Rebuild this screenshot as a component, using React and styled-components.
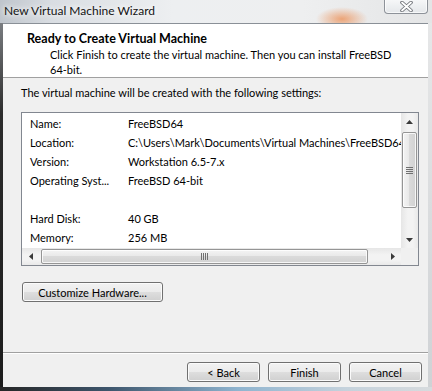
import React from 'react';
import styled, { createGlobalStyle } from 'styled-components';

const FONT = `Lato, "Open Sans", "Liberation Sans", sans-serif`;

const Global = createGlobalStyle`
  html, body { margin: 0; padding: 0; width: 432px; height: 391px; overflow: hidden; }
  body { font-family: ${FONT}; font-size: 11px; color: #000; }
  * { box-sizing: border-box; }
`;

const Window = styled.div`
  width: 432px;
  height: 391px;
  display: flex;
  flex-direction: column;
  overflow: hidden;
  background:
    radial-gradient(ellipse 26px 12px at 342px 19px, rgba(236, 140, 80, 0.75), rgba(236, 140, 80, 0) 100%),
    linear-gradient(90deg, #bfc5cc 0%, #d9dde2 12%, #edeff1 40%, #eeeff0 70%, #e4e5e6 100%);
`;

const TitleBar = styled.div`
  height: 23px;
  flex-shrink: 0;
  display: flex;
  align-items: flex-start;
`;

const Caption = styled.div`
  flex: 1;
  font-size: 12px;
  line-height: 16px;
  padding: 3px 0 0 4px;
  color: #141414;
  text-shadow: 0 0 5px #fff, 0 0 9px #fff;
`;

const CloseButton = styled.div`
  width: 44px;
  height: 15px;
  margin: -1px 4px 0 0;
  border: 1px solid #8d9299;
  border-top: none;
  border-radius: 0 0 4px 4px;
  background: linear-gradient(#f7f8f9, #e4e7ea);
  box-shadow: inset 0 0 0 1px rgba(255, 255, 255, 0.7);
  display: flex;
  align-items: center;
  justify-content: center;
`;

const Body = styled.div`
  flex: 1;
  min-height: 0;
  display: flex;
`;

const EdgeLeft = styled.div`
  width: 3px;
  background: linear-gradient(#7a7d81, #2c2c2c 25%, #1c1c1c);
`;

const EdgeRight = styled.div`
  width: 4px;
  background: linear-gradient(#e6e7e8, #cfd2d5);
`;

const BottomEdge = styled.div`
  height: 4px;
  flex-shrink: 0;
  background: linear-gradient(90deg, #262626 0%, #3d556c 25%, #8fb4cf 55%, #c5d2dc 80%, #d7dbde 100%);
`;

const Client = styled.div`
  flex: 1;
  display: flex;
  flex-direction: column;
  background: #f0f0f0;
  border-top: 1px solid #8a9097;
`;

const Header = styled.div`
  height: 54px;
  flex-shrink: 0;
  background: #fff;
  border-bottom: 1px solid #a0a0a0;
  padding: 7px 10px 0 24px;
`;

const HeaderTitle = styled.div`
  font-weight: 700;
  font-size: 12.5px;
  line-height: 16px;
`;

const HeaderText = styled.div`
  padding-left: 23px;
  line-height: 15px;
`;

const Content = styled.div`
  padding: 7px 9px 0 18px;
  display: flex;
  flex-direction: column;
  align-items: flex-start;
`;

const Intro = styled.div`
  line-height: 15px;
`;

const ListBox = styled.div`
  margin-top: 12px;
  width: 398px;
  height: 154px;
  border: 1px solid #828790;
  background: #fff;
  display: grid;
  grid-template-columns: 1fr 17px;
  grid-template-rows: 1fr 17px;
`;

const ListArea = styled.div`
  overflow: hidden;
  padding: 1px 0 0 8px;
`;

const Row = styled.div`
  display: flex;
  height: 19px;
  line-height: 19px;
  white-space: nowrap;
`;

const Label = styled.div`
  width: 98px;
  flex-shrink: 0;
`;

const Value = styled.div``;

const VScroll = styled.div`
  display: flex;
  flex-direction: column;
  background: linear-gradient(90deg, #e6e6e6, #f3f3f3 40%, #f3f3f3 70%, #e9e9e9);
`;

const HScroll = styled.div`
  display: flex;
  background: linear-gradient(#e6e6e6, #f3f3f3 40%, #f3f3f3 70%, #e9e9e9);
`;

const ArrowBox = styled.div`
  width: 17px;
  height: 17px;
  flex-shrink: 0;
  display: flex;
  align-items: center;
  justify-content: center;
`;

const Track = styled.div`
  flex: 1;
  display: flex;
  flex-direction: ${p => (p.vertical ? 'column' : 'row')};
`;

const Thumb = styled.div`
  border: 1px solid #959595;
  border-radius: 2px;
  display: flex;
  align-items: center;
  justify-content: center;
  box-shadow: inset 0 0 0 1px rgba(255, 255, 255, 0.8);
  ${p =>
    p.vertical
      ? `margin: 2px 1px 0 1px; height: 76px;
         background: linear-gradient(90deg, #f4f4f4, #e9e9e9 45%, #dadada 50%, #d2d2d2 100%);`
      : `margin: 1px 0 1px 2px; width: 327px;
         background: linear-gradient(#f4f4f4, #e9e9e9 45%, #dadada 50%, #d2d2d2 100%);`}
`;

const Corner = styled.div`
  background: #f0f0f0;
`;

const Button = styled.button`
  height: 20px;
  width: ${p => p.w || 73}px;
  padding: 0;
  border: 1px solid #707070;
  border-radius: 3px;
  background: linear-gradient(#f2f2f2 0%, #ebebeb 50%, #dedede 50%, #d0d0d0 100%);
  box-shadow: inset 0 0 0 1px #fbfbfb;
  font-family: ${FONT};
  font-size: 11px;
  color: #000;
  line-height: 17px;
`;

const CustomizeButton = styled(Button)`
  margin: 16px 0 0 1px;
`;

const Footer = styled.div`
  margin-top: auto;
  border-top: 1px solid #a0a0a0;
  box-shadow: inset 0 1px 0 #fff;
  padding: 9px 6px 5px;
  display: flex;
  justify-content: flex-end;
  gap: 8px;
`;

const Arrow = ({ dir }) => {
  const pts = {
    up: '0,4 3.5,0 7,4',
    down: '0,0 7,0 3.5,4',
    left: '4,0 4,7 0,3.5',
    right: '0,0 4,3.5 0,7',
  }[dir];
  const horiz = dir === 'left' || dir === 'right';
  return (
    <svg width={horiz ? 4 : 7} height={horiz ? 7 : 4} viewBox={horiz ? '0 0 4 7' : '0 0 7 4'}>
      <polygon points={pts} fill="#3a3a3a" />
    </svg>
  );
};

const GripV = () => (
  <svg width="7" height="7" viewBox="0 0 7 7">
    {[0.5, 2.5, 4.5, 6.5].map(y => (
      <line key={y} x1="0" x2="7" y1={y} y2={y} stroke="#707070" strokeWidth="1" />
    ))}
  </svg>
);

const GripH = () => (
  <svg width="7" height="7" viewBox="0 0 7 7">
    {[0.5, 2.5, 4.5, 6.5].map(x => (
      <line key={x} y1="0" y2="7" x1={x} x2={x} stroke="#707070" strokeWidth="1" />
    ))}
  </svg>
);

const CloseGlyph = () => (
  <svg width="13" height="11" viewBox="0 0 13 11">
    <path d="M2 1.5 L11 9.5 M11 1.5 L2 9.5" stroke="#6d7076" strokeWidth="3.6" strokeLinecap="round" />
    <path d="M2 1.5 L11 9.5 M11 1.5 L2 9.5" stroke="#ffffff" strokeWidth="1.8" strokeLinecap="round" />
  </svg>
);

const settings = [
  ['Name:', 'FreeBSD64'],
  ['Location:', 'C:\\Users\\Mark\\Documents\\Virtual Machines\\FreeBSD64'],
  ['Version:', 'Workstation 6.5-7.x'],
  ['Operating Syst...', 'FreeBSD 64-bit'],
  ['', ''],
  ['Hard Disk:', '40 GB'],
  ['Memory:', '256 MB'],
];

export default function App() {
  return (
    <Window>
      <Global />
      <TitleBar>
        <Caption>New Virtual Machine Wizard</Caption>
        <CloseButton>
          <CloseGlyph />
        </CloseButton>
      </TitleBar>
      <Body>
        <EdgeLeft />
        <Client>
          <Header>
            <HeaderTitle>Ready to Create Virtual Machine</HeaderTitle>
            <HeaderText>
              Click Finish to create the virtual machine. Then you can install FreeBSD
              <br />
              64-bit.
            </HeaderText>
          </Header>
          <Content>
            <Intro>The virtual machine will be created with the following settings:</Intro>
            <ListBox>
              <ListArea>
                {settings.map(([l, v], i) => (
                  <Row key={i}>
                    <Label>{l}</Label>
                    <Value>{v}</Value>
                  </Row>
                ))}
              </ListArea>
              <VScroll>
                <ArrowBox><Arrow dir="up" /></ArrowBox>
                <Track vertical>
                  <Thumb vertical><GripV /></Thumb>
                </Track>
                <ArrowBox><Arrow dir="down" /></ArrowBox>
              </VScroll>
              <HScroll>
                <ArrowBox><Arrow dir="left" /></ArrowBox>
                <Track>
                  <Thumb><GripH /></Thumb>
                </Track>
                <ArrowBox><Arrow dir="right" /></ArrowBox>
              </HScroll>
              <Corner />
            </ListBox>
            <CustomizeButton w={141}>Customize Hardware...</CustomizeButton>
          </Content>
          <Footer>
            <Button>&lt; Back</Button>
            <Button>Finish</Button>
            <Button>Cancel</Button>
          </Footer>
        </Client>
        <EdgeRight />
      </Body>
      <BottomEdge />
    </Window>
  );
}
